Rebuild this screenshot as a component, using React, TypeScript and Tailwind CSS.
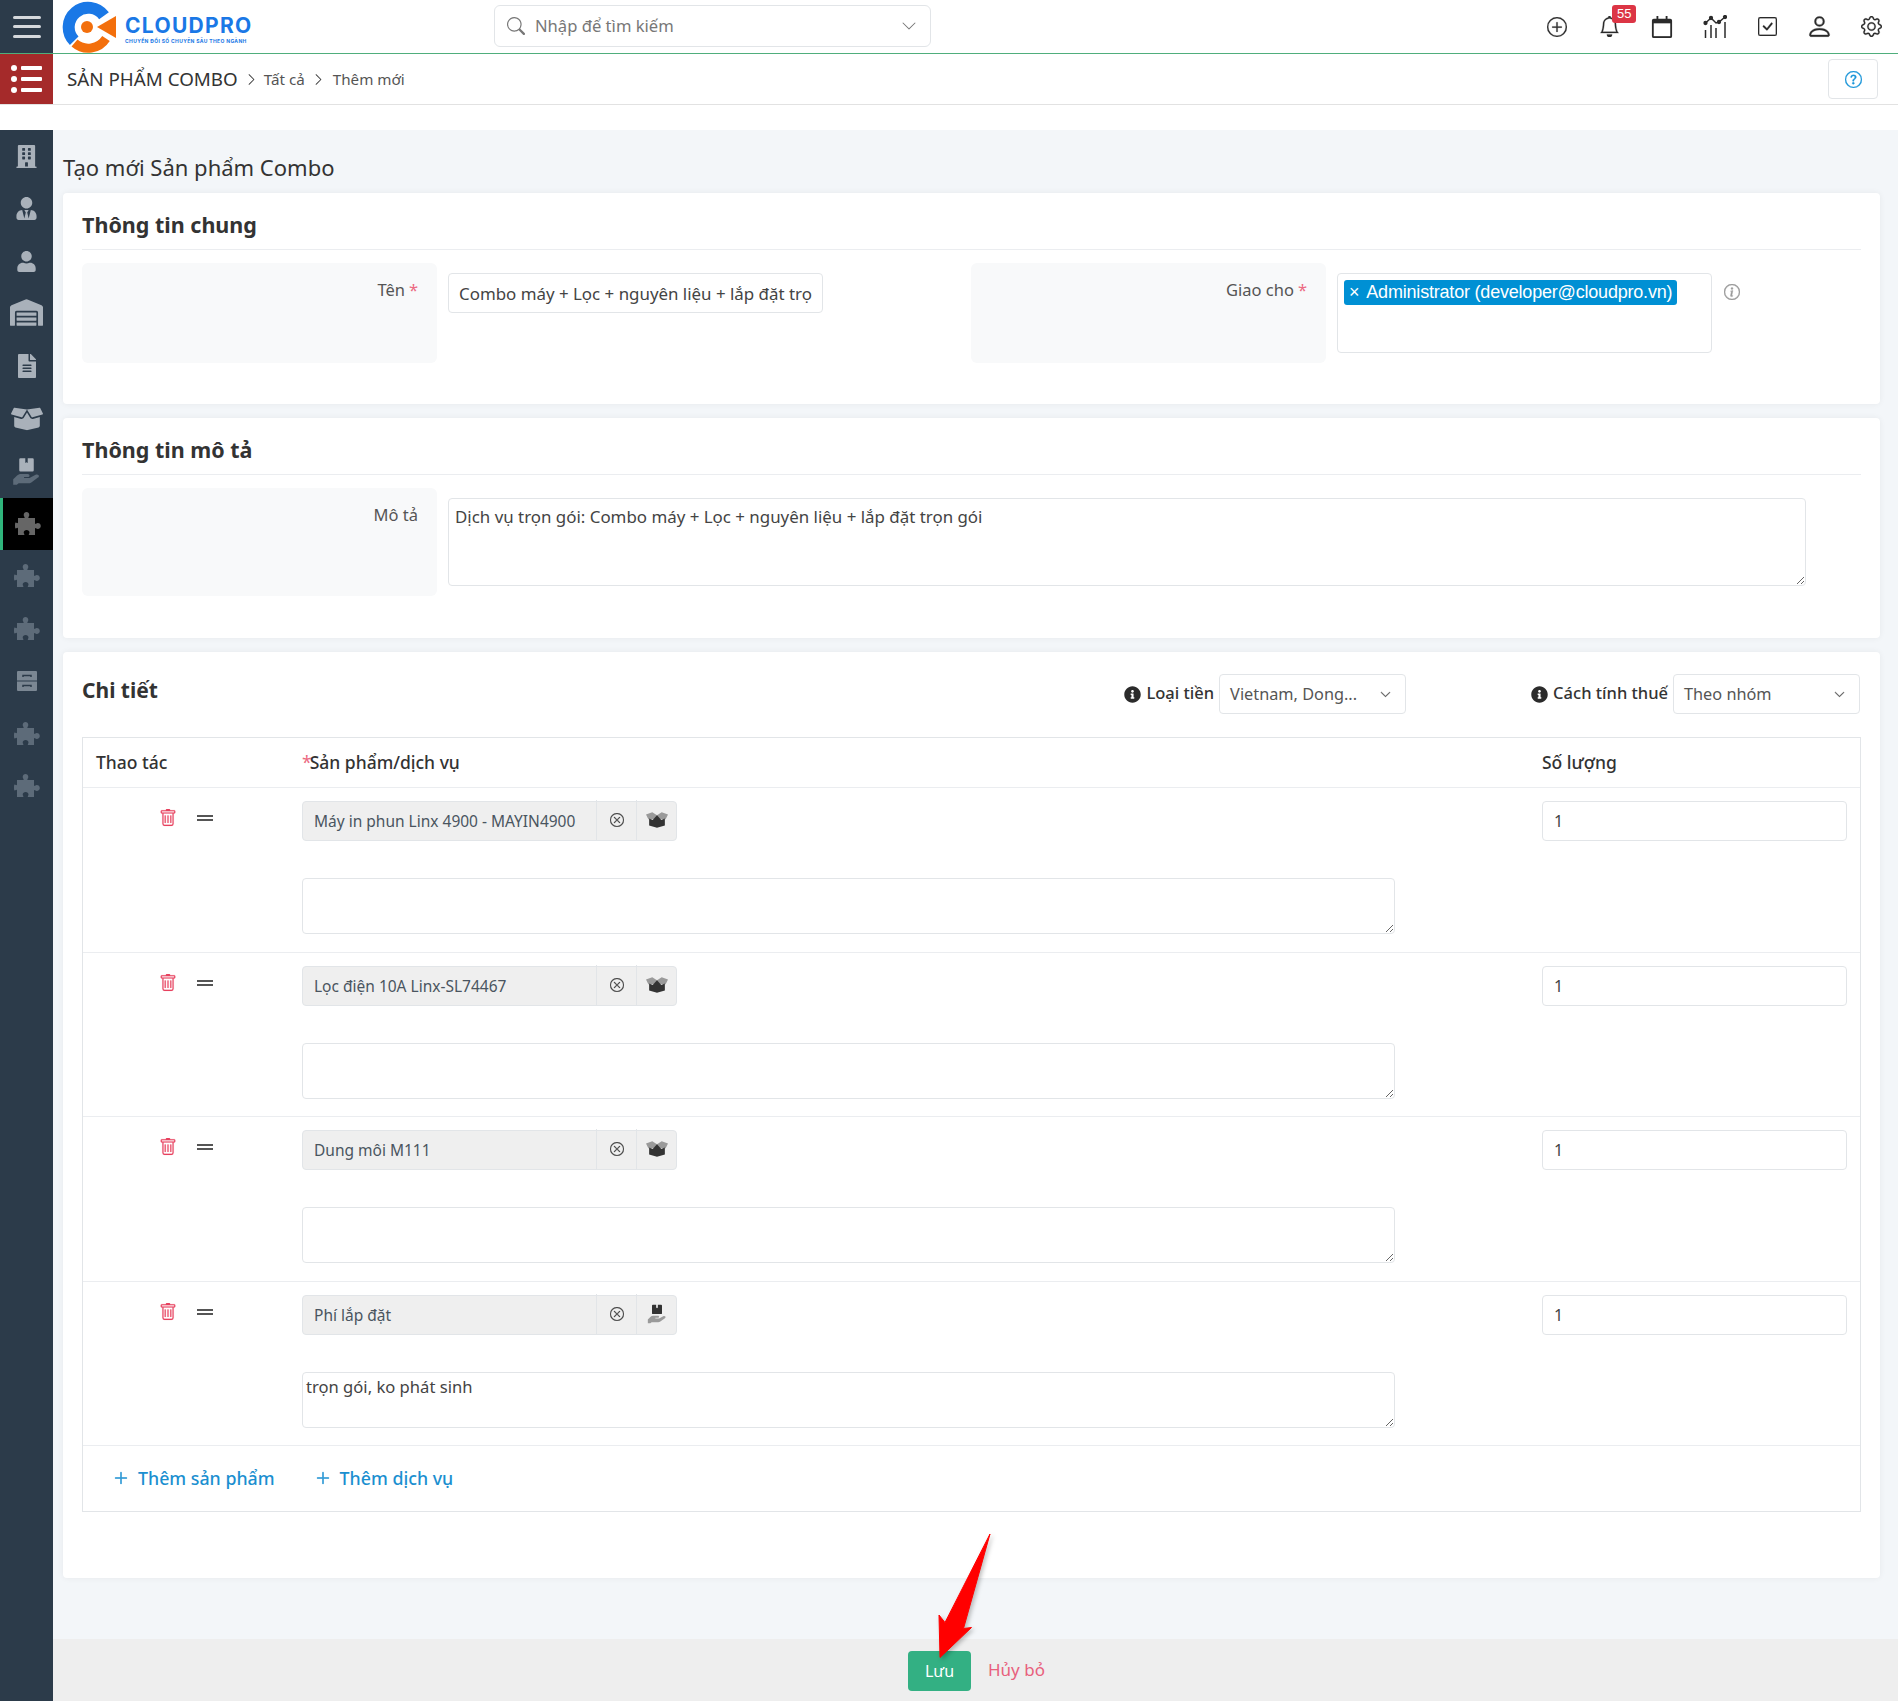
import React from 'react';
import { BsPlusCircle, BsBell, BsCheckSquare, BsPerson, BsGear, BsQuestionCircle, BsXCircle, BsTrash, BsInfoCircle, BsSearch, BsChevronDown, BsChevronRight, BsPlusLg } from 'react-icons/bs';
import { FaBuilding, FaUserTie, FaUser, FaWarehouse, FaFileAlt, FaBoxOpen, FaInfoCircle } from 'react-icons/fa';

const font = { fontFamily: '"Noto Sans", "Open Sans", sans-serif' };

// hộp trên bàn tay - không có sẵn trong icon free
const HandBox = ({ className, size = 24, hand = '#5d6b79' }: { className?: string; size?: number; hand?: string }) => (
  <svg viewBox="0 0 24 24" width={size} height={size} className={className}>
    <path d="M7 1h4v4l1-.7L13 5V1h4a1 1 0 0 1 1 1v9a1 1 0 0 1-1 1H7a1 1 0 0 1-1-1V2a1 1 0 0 1 1-1z" fill="currentColor" />
    <path d="M1 18.500l3-3c1-1 2.200-1.500 3.500-1.500H13c1 0 1.500.6 1.500 1.300 0 .8-.6 1.300-1.500 1.300H10v.7h4.500l5-2.600c.9-.5 1.900-.4 2.500.3.500.6.300 1.500-.5 2L16 21c-.8.500-1.700.8-2.700.8H5.500L4 23H1z" fill={hand} />
  </svg>
);

// hộp mở hai màu ở dòng sản phẩm
const OpenBox = () => (
  <svg viewBox="0 0 28 20" width={22} height={16}>
    <path d="M0 3L8 0l6 4 6-4 8 3-3 6H3z" fill="#9a9a9a" />
    <path d="M4 8l4.500 2L14 4l5.500 6L24 8v9l-10 3-10-3z" fill="#333" />
  </svg>
);

const Cabinet = ({ className }: { className?: string }) => (
  <svg viewBox="0 0 24 24" width={24} height={24} className={className}>
    <path d="M2 3a1 1 0 0 1 1-1h18a1 1 0 0 1 1 1v8.500H2zM2 12.500h20V21a1 1 0 0 1-1 1H3a1 1 0 0 1-1-1z" fill="currentColor" />
    <path d="M8 8V6.500h8V8M8 18v-1.500h8V18" stroke="#2c3b4a" strokeWidth="1.500" fill="none" />
  </svg>
);

// mảnh ghép: núm trên và phải, khuyết dưới và trái
const Puzzle = ({ className }: { className?: string }) => (
  <svg viewBox="0 0 26 24" width={26} height={24} className={className}>
    <path
      fill="currentColor"
      d="M3 6h6c.6 0 .8-.5.5-1-.5-.7-.8-1.300-.8-2C8.700 1.300 10 0 11.500 0s2.800 1.300 2.800 3c0 .7-.3 1.300-.8 2-.3.5-.1 1 .5 1H20v5.300c0 .5.500.8 1 .5.600-.4 1.100-.7 1.800-.7 1.700 0 3 1.300 3 2.900s-1.300 2.900-3 2.900c-.7 0-1.200-.3-1.800-.7-.5-.3-1-.1-1 .5V23h-5.500c-.6 0-.9-.5-.6-1 .4-.6.600-1 .6-1.600 0-1.300-1.200-2.400-2.900-2.400s-2.900 1.100-2.900 2.400c0 .6.200 1 .6 1.600.3.500 0 1-.6 1H3v-6.500c0-.6-.5-.9-1-.6-.5.300-.9.500-1.400.5C.2 16.400 0 15.400 0 13.500s.2-2.900.6-2.900c.5 0 .9.200 1.400.5.500.3 1 0 1-.6z"
    />
  </svg>
);

const sideItems = [
  { id: 'a', icon: <FaBuilding size={23} className="text-[#a9b1ba]" /> },
  { id: 'b', icon: <FaUserTie size={23} className="text-[#a9b1ba]" /> },
  { id: 'c', icon: <FaUser size={21} className="text-[#a9b1ba]" /> },
  { id: 'd', icon: <FaWarehouse size={33} className="text-[#a9b1ba] -mt-[3px]" /> },
  { id: 'e', icon: <FaFileAlt size={24} className="text-[#a9b1ba]" /> },
  { id: 'f', icon: <FaBoxOpen size={32} className="text-[#a9b1ba]" /> },
  { id: 'g', icon: <HandBox size={29} className="text-[#a9b1ba]" /> },
  { id: 'h', active: true, icon: <Puzzle className="text-[#666666]" /> },
  { id: 'i', icon: <Puzzle className="text-[#5d6b79]" /> },
  { id: 'j', icon: <Puzzle className="text-[#5d6b79]" /> },
  { id: 'k', icon: <Cabinet className="text-[#7b8793]" /> },
  { id: 'l', icon: <Puzzle className="text-[#5d6b79]" /> },
  { id: 'm', icon: <Puzzle className="text-[#5d6b79]" /> },
];

const rows = [
  { name: 'Máy in phun Linx 4900 - MAYIN4900', note: '', service: false },
  { name: 'Lọc điện 10A Linx-SL74467', note: '', service: false },
  { name: 'Dung môi M111', note: '', service: false },
  { name: 'Phí lắp đặt', note: 'trọn gói, ko phát sinh', service: true },
];

const Logo = () => (
  <div className="flex items-center ml-[9px]">
    <svg viewBox="0 0 56 52" width={56} height={52}>
      <path d="M42 14.800A19.500 19.500 0 1 0 12.200 39.800" fill="none" stroke="#1a78e6" strokeWidth="12" />
      <path d="M12.500 42A21 21 0 0 0 44 37.500" fill="none" stroke="#f36f0c" strokeWidth="9" />
      <circle cx="25" cy="26" r="6" fill="#f36f0c" />
      <path d="M35 26L54 15v22z" fill="#f36f0c" />
    </svg>
    <div className="ml-[7px] mt-[5px] flex flex-col">
      <span className="text-[21px] leading-[24px] font-bold tracking-[1.300px] text-[#1a78e6]" style={{ fontFamily: 'Inter, sans-serif' }}>CLOUDPRO</span>
      <span className="text-[5px] leading-[7px] font-bold tracking-[0.35px] text-[#1a78e6] whitespace-nowrap" style={{ fontFamily: 'Inter, sans-serif' }}>CHUYỂN ĐỔI SỐ CHUYÊN SÂU THEO NGÀNH</span>
    </div>
  </div>
);

const ChartIcon = () => (
  <svg viewBox="0 0 24 24" width={24} height={24} fill="none" stroke="#2b2b2b" strokeWidth="1.500">
    <path d="M2.500 8L8 3l5 5 3-1 6-5" />
    <circle cx="2.500" cy="8" r="1.400" fill="#2b2b2b" />
    <circle cx="8" cy="3" r="1.400" fill="#2b2b2b" />
    <circle cx="16" cy="7" r="1.400" fill="#2b2b2b" />
    <circle cx="22" cy="2" r="1.400" fill="#2b2b2b" />
    <path d="M2.500 15v8M8 10v13M13 13v10M22 7v16" />
  </svg>
);

const CalendarIcon = () => (
  <svg viewBox="0 0 24 24" width={22} height={22}>
    <path d="M6 0h2v3h8V0h2v3h3a2 2 0 0 1 2 2v17a2 2 0 0 1-2 2H3a2 2 0 0 1-2-2V5a2 2 0 0 1 2-2h3z" fill="#2b2b2b" />
    <rect x="3" y="8" width="18" height="14" fill="#fff" />
  </svg>
);

const Card = ({ title, className, children }: { title: string; className: string; children: React.ReactNode }) => (
  <section className={`bg-white rounded-[4px] shadow-[0_0_6px_rgba(0,0,0,0.06)] px-[19px] ${className}`}>
    <h3 className="h-[57px] pt-[12px] border-b border-[#ebedf0] text-[21.500px] leading-[40px] font-bold text-[#333]">{title}</h3>
    {children}
  </section>
);

const LabelPanel = ({ label, required, className }: { label: string; required?: boolean; className: string }) => (
  <div className={`w-[355px] bg-[#f8f9fa] rounded-[6px] px-[19px] pt-[15px] text-right text-[16.500px] leading-[24px] text-[#555] ${className}`}>
    {label}
    {required && <span className="text-[#ec6a82] ml-[4px]">*</span>}
  </div>
);

const selectBox = 'w-[187px] h-[40px] border border-[#e2e5e8] rounded-[4px] flex items-center justify-between pl-[10px] pr-[14px] text-[16.300px] text-[#555] bg-white';

const ProductRow = ({ name, note, service }: { name: string; note: string; service: boolean }) => (
  <div className="h-[164.500px] border-b border-[#ebedf0] grid grid-cols-[219px_1240px_1fr] pt-[13px]">
    <div className="flex items-start pl-[76px] pt-[8px] gap-[20px]">
      <BsTrash size={18} stroke="#e8405e" strokeWidth={0.12} className="text-[#e8405e]" />
      <div className="w-[16px] mt-[6px] h-[6px] border-y-2 border-[#555]" />
    </div>
    <div>
      <div className="w-[375px] h-[40px] flex bg-[#efefef] border border-[#e2e5e8] rounded-[4px]">
        <div className="flex-1 pl-[11px] pt-[2px] flex items-center text-[15.500px] text-[#4a5560]">{name}</div>
        <div className="w-[40px] border-l border-[#e2e5e8] flex items-center justify-center -mt-[2px]">
          <BsXCircle size={14} stroke="#444" strokeWidth={0.3} className="text-[#444]" />
        </div>
        <div className="w-[40px] border-l border-[#e2e5e8] flex items-center justify-center -mt-[2px]">
          {service ? <HandBox size={20} hand="#9a9a9a" className="text-[#333]" /> : <OpenBox />}
        </div>
      </div>
      <textarea
        defaultValue={note}
        className="mt-[37px] block w-[1093px] h-[56px] border border-[#e2e5e8] rounded-[4px] px-[3px] py-[2px] text-[16.600px] text-[#444] bg-white outline-none"
      />
    </div>
    <div className="pr-[13px]">
      <input
        defaultValue="1"
        className="w-full h-[40px] border border-[#e2e5e8] rounded-[4px] px-[11px] text-[16px] text-[#444] outline-none"
      />
    </div>
  </div>
);

export default function App() {
  const iconInk = { color: '#2b2b2b', stroke: '#2b2b2b', strokeWidth: 0.2 };
  return (
    <div className="relative w-full h-[1701px] overflow-hidden flex flex-col bg-white text-[#333]" style={font}>
      {/* thanh trên cùng */}
      <header className="h-[54px] flex items-stretch border-b border-[#4fae7c]">
        <div className="w-[53px] bg-[#2c3b4a] flex flex-col items-center justify-center gap-[6.500px]">
          <span className="w-[28px] h-[3px] rounded bg-[#d5d8dc]" />
          <span className="w-[28px] h-[3px] rounded bg-[#d5d8dc]" />
          <span className="w-[28px] h-[3px] rounded bg-[#d5d8dc]" />
        </div>
        <Logo />
        <div className="absolute left-[494px] top-[5px] w-[437px] h-[42px] border border-[#e2e5e8] rounded-[6px] flex items-center pl-[12px] pr-[13px] text-[16.600px] text-[#777]">
          <BsSearch size={18} className="text-[#777]" />
          <span className="ml-[10px] flex-1">Nhập để tìm kiếm</span>
          <BsChevronDown size={16} className="text-[#777]" />
        </div>
        <div className="ml-auto flex items-center h-[53px]">
          {[
            <BsPlusCircle size={20} {...iconInk} />,
            <div className="relative">
              <BsBell size={21} {...iconInk} />
              <span className="absolute -top-[11px] left-[13px] w-[24px] h-[18px] rounded-[3px] bg-[#dc3545] text-white text-[13px] leading-[18px] text-center" style={{ fontFamily: '"Liberation Sans", sans-serif' }}>55</span>
            </div>,
            <CalendarIcon />,
            <ChartIcon />,
            <BsCheckSquare size={19} {...iconInk} />,
            <BsPerson size={27} {...iconInk} />,
            <BsGear size={21} {...iconInk} />,
          ].map((icon, i) => (
            <div key={i} className="w-[52.400px] flex items-center justify-center">{icon}</div>
          ))}
        </div>
      </header>

      {/* breadcrumb */}
      <div className="h-[51px] flex items-center border-b border-[#e2e2e2]">
        <div className="w-[53px] h-full bg-[#a52a2a] flex flex-col items-center justify-center gap-[5px]">
          {[0, 1, 2].map((i) => (
            <div key={i} className="flex items-center gap-[4px]">
              <span className="w-[6px] h-[6px] rounded-full bg-white" />
              <span className="w-[21px] h-[4px] rounded-[1px] bg-white" />
            </div>
          ))}
        </div>
        <span className="ml-[14px] text-[18.800px] text-[#333]">SẢN PHẨM COMBO</span>
        <BsChevronRight size={13} className="ml-[7px] text-[#333]" />
        <span className="ml-[6px] pt-[1px] text-[15.200px] text-[#555]">Tất cả</span>
        <BsChevronRight size={13} className="ml-[7px] text-[#333]" />
        <span className="ml-[8px] pt-[1px] text-[15.200px] text-[#555]">Thêm mới</span>
        <div className="ml-auto mr-[20px] w-[50px] h-[40px] border border-[#e2e5e8] rounded-[4px] flex items-center justify-center">
          <BsQuestionCircle size={17} stroke="#1b95d8" strokeWidth={0.3} className="text-[#1b95d8]" />
        </div>
      </div>

      <div className="h-[25px]" />

      <div className="flex-1 flex min-h-0">
        {/* menu trái */}
        <aside className="w-[53px] bg-[#2c3b4a] shrink-0">
          {sideItems.map((item) => (
            <div
              key={item.id}
              className={`h-[52.500px] flex items-center justify-center ${item.active ? 'bg-black border-l-[3px] border-[#2fb57c]' : ''}`}
            >
              {item.icon}
            </div>
          ))}
        </aside>

        <main className="flex-1 bg-[#f3f6f9] flex flex-col min-w-0">
          <div className="flex-1 pl-[10px] pr-[18px]">
            <div className="h-[63px] pt-[18px] text-[22px] leading-[38px] text-[#333]">Tạo mới Sản phẩm Combo</div>

            <Card title="Thông tin chung" className="h-[211px] mb-[14px]">
              <div className="flex mt-[13px]">
                <LabelPanel label="Tên" required className="h-[100px]" />
                <input
                  defaultValue="Combo máy + Lọc + nguyên liệu + lắp đặt trọn gói"
                  className="ml-[11px] mt-[10px] w-[375px] h-[40px] border border-[#e2e5e8] rounded-[4px] px-[10px] text-[16.900px] text-[#444] outline-none"
                />
                <LabelPanel label="Giao cho" required className="h-[100px] ml-[148px]" />
                <div className="ml-[11px] mt-[10px] w-[375px] h-[80px] border border-[#e2e5e8] rounded-[4px] p-[6px]">
                  <div className="h-[25px] w-fit rounded-[3px] bg-[#0090d4] text-white text-[18px] leading-[25px] px-[5px] tracking-[-0.2px] whitespace-nowrap flex" style={{ fontFamily: '"Liberation Sans", sans-serif' }}>
                    <span className="mr-[7px]">×</span>
                    <span>Administrator (developer@cloudpro.vn)</span>
                  </div>
                </div>
                <BsInfoCircle size={16} stroke="#999" strokeWidth={0.4} className="ml-[12px] mt-[21px] text-[#999]" />
              </div>
            </Card>

            <Card title="Thông tin mô tả" className="h-[220px] mb-[14px]">
              <div className="flex mt-[13px]">
                <LabelPanel label="Mô tả" className="h-[108px]" />
                <textarea
                  defaultValue="Dịch vụ trọn gói: Combo máy + Lọc + nguyên liệu + lắp đặt trọn gói"
                  className="ml-[11px] mt-[10px] w-[1358px] h-[88px] border border-[#e2e5e8] rounded-[4px] px-[6px] py-[5px] text-[16.900px] text-[#444] outline-none"
                />
              </div>
            </Card>

            <section className="h-[926px] bg-white rounded-[4px] shadow-[0_0_6px_rgba(0,0,0,0.06)] px-[19px] pt-[22px]">
              <div className="h-[40px] flex items-center pr-[1px]">
                <h3 className="text-[21px] font-bold text-[#333] -mt-[7px]">Chi tiết</h3>
                <div className="ml-auto flex items-center gap-[5px] text-[16.500px] font-medium text-[#333]">
                  <FaInfoCircle size={17} className="text-[#2b2b2b]" />
                  <span className="-mt-[2px]">Loại tiền</span>
                  <div className={selectBox + ' font-normal'}>
                    <span>Vietnam, Dong...</span>
                    <BsChevronDown size={11} stroke="#555" strokeWidth={0.6} className="text-[#555]" />
                  </div>
                </div>
                <div className="ml-[125px] flex items-center gap-[5px] text-[16.500px] font-medium text-[#333]">
                  <FaInfoCircle size={17} className="text-[#2b2b2b]" />
                  <span className="-mt-[2px]">Cách tính thuế</span>
                  <div className={selectBox + ' font-normal'}>
                    <span>Theo nhóm</span>
                    <BsChevronDown size={11} stroke="#555" strokeWidth={0.6} className="text-[#555]" />
                  </div>
                </div>
              </div>

              <div className="mt-[23px] h-[775px] border border-[#e2e5e8]">
                <div className="h-[50px] pb-[1px] border-b border-[#ebedf0] grid grid-cols-[219px_1240px_1fr] items-center text-[17.500px] font-medium text-[#333]">
                  <span className="pl-[13px]">Thao tác</span>
                  <span><span className="text-[#ec6a82] font-normal -mr-[2px]">*</span>Sản phẩm/dịch vụ</span>
                  <span>Số lượng</span>
                </div>
                {rows.map((row) => (
                  <ProductRow key={row.name} {...row} />
                ))}
                <div className="h-[64px] flex items-center pl-[30px] text-[17.800px] font-medium text-[#1b8fd0]">
                  <BsPlusLg size={16} stroke="#1b8fd0" strokeWidth={0.5} />
                  <span className="ml-[9px]">Thêm sản phẩm</span>
                  <BsPlusLg size={16} stroke="#1b8fd0" strokeWidth={0.5} className="ml-[40px]" />
                  <span className="ml-[9px]">Thêm dịch vụ</span>
                </div>
              </div>
            </section>
          </div>

          {/* nút dưới */}
          <footer className="h-[62px] bg-[#eeeeee] flex items-center justify-center gap-[17px] pl-[3px]">
            <button className="w-[63px] h-[40px] mt-[1px] rounded-[4px] bg-[#33b083] text-white text-[16px]">Lưu</button>
            <span className="text-[17px] text-[#e8607c] w-[58px] -mt-[1px]">Hủy bỏ</span>
          </footer>
        </main>
      </div>

      {/* mũi tên chú thích */}
      <svg className="absolute left-[920px] top-[1525px] drop-shadow-[2px_2px_2px_rgba(0,0,0,0.25)]" width={80} height={140} viewBox="920 1525 80 140">
        <path d="M990 1534L963.500 1628.500L971.500 1627.500L940 1657.500L939 1615L945 1622.500Z" fill="#ff0000" stroke="#ff0000" strokeLinejoin="round" />
      </svg>
    </div>
  );
}
